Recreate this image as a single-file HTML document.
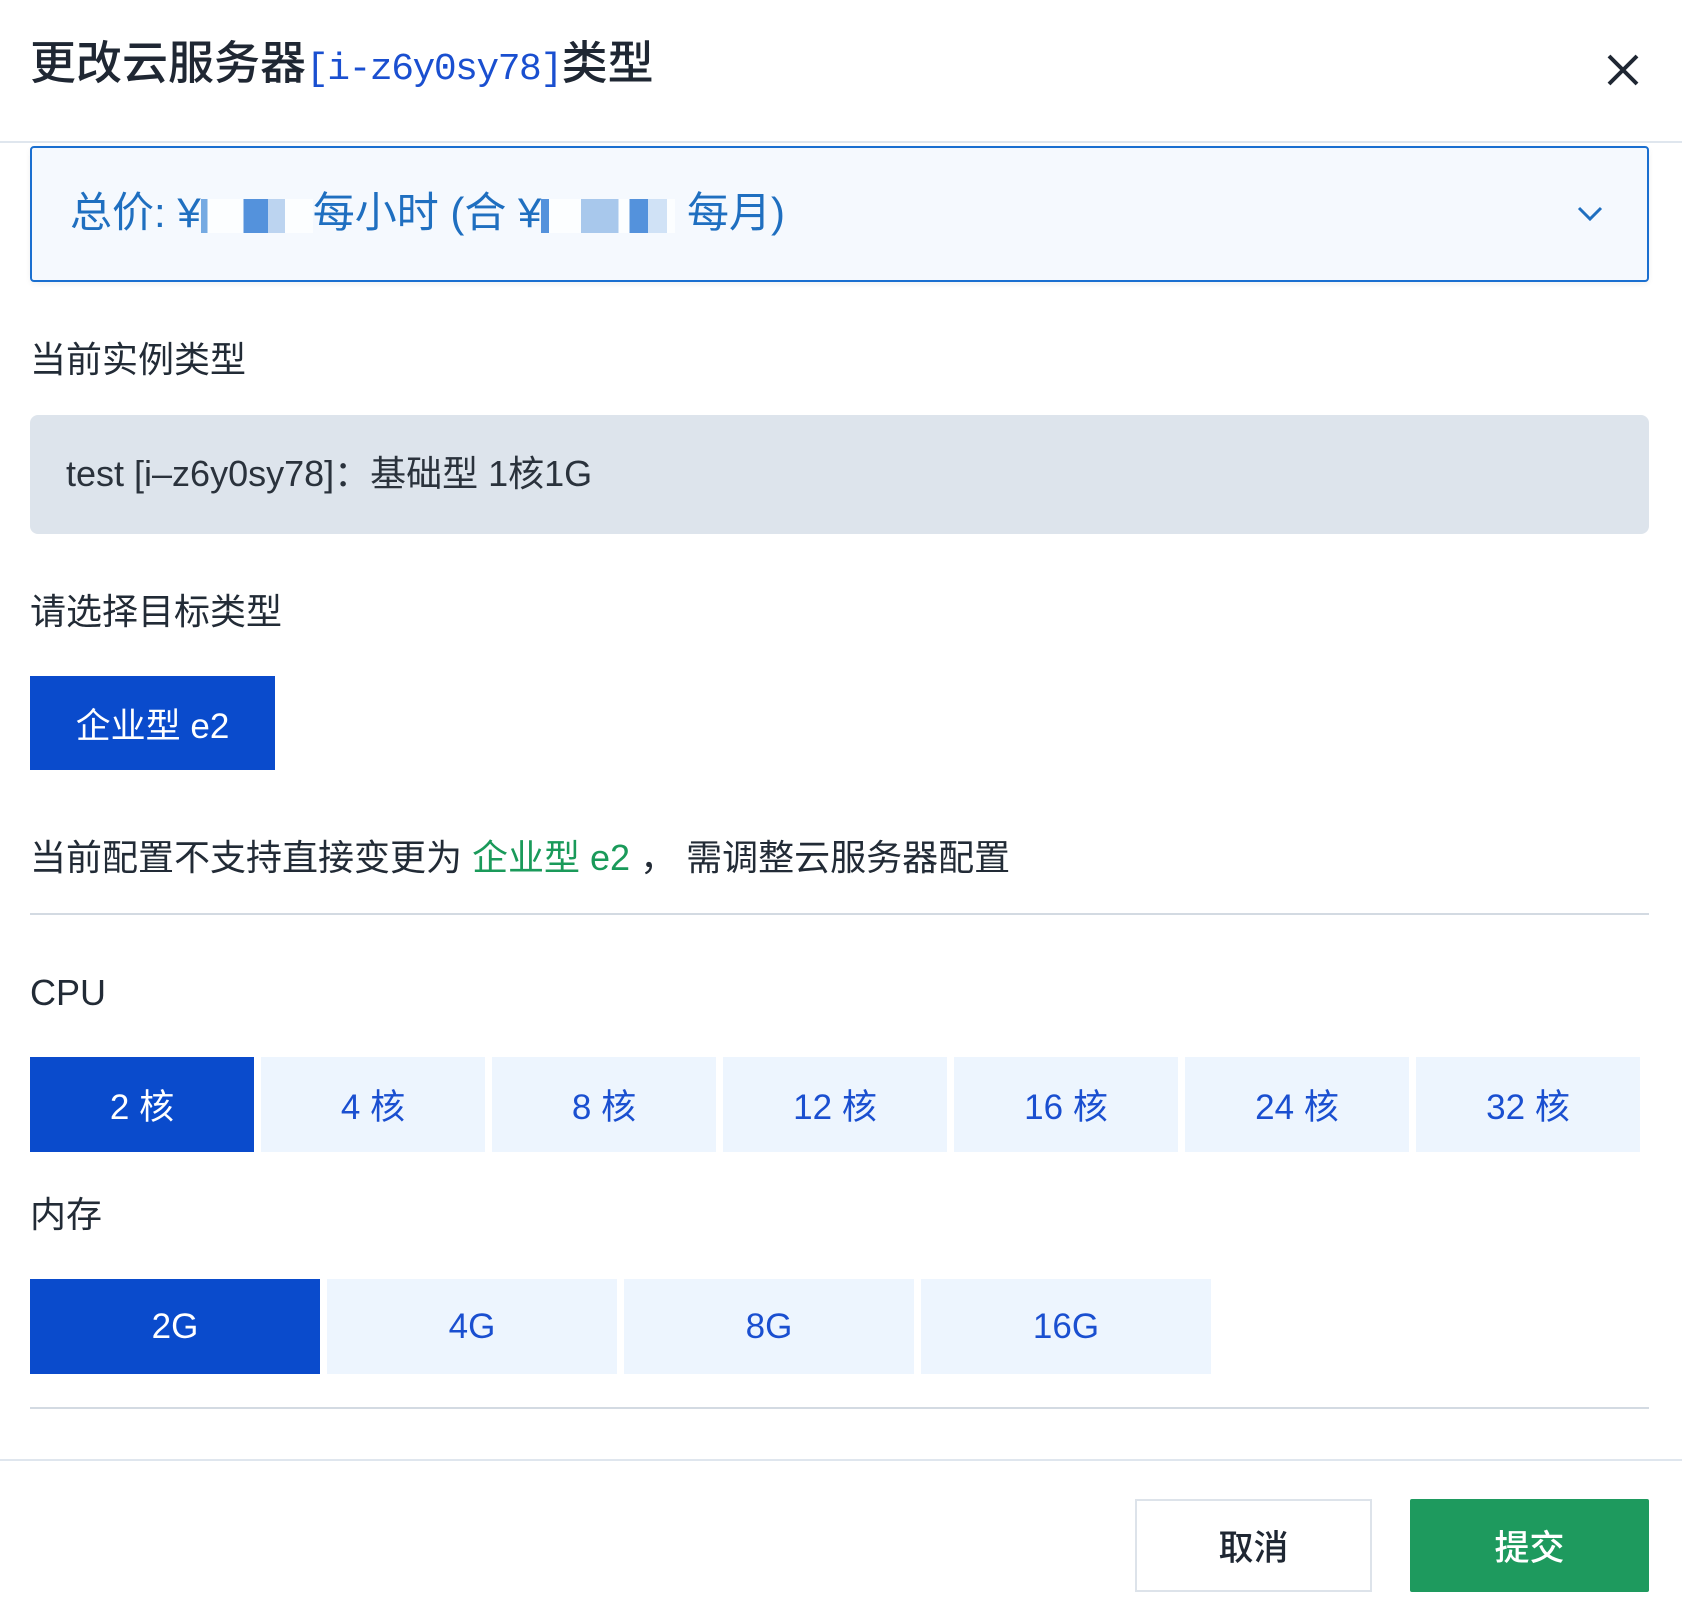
<!DOCTYPE html>
<html><head><meta charset="utf-8"><style>
*{margin:0;padding:0;box-sizing:border-box}
body{width:1682px;height:1606px;background:#fff;position:relative;overflow:hidden;font-family:"Liberation Sans","Noto Sans CJK SC",sans-serif;color:#1f2937}
.a{position:absolute;white-space:nowrap}
.lbl{font-size:36px;color:#222b36;line-height:1}
.btn{position:absolute;display:flex;align-items:center;justify-content:center;font-size:35px;color:#1a4fd0;background:#edf5fe}
.sel{background:#0a4bcc;color:#fff}
</style></head><body>
<div class="a" style="left:30px;top:36px;font-size:46px;line-height:54px;color:#1f2733;font-weight:500">更改云服务器<span style="font-family:'Liberation Mono',monospace;color:#1a4fd0;font-weight:400;font-size:38px;letter-spacing:-1.5px">[i-z6y0sy78]</span>类型</div>
<svg class="a" style="left:1604px;top:51px" width="38" height="38" viewBox="0 0 38 38"><path d="M5 5L33 33M33 5L5 33" stroke="#1f2733" stroke-width="4"/></svg>
<div class="a" style="left:0;top:141px;width:1682px;height:2px;background:#dfe6ee"></div>
<div class="a" style="left:30px;top:146px;width:1619px;height:136px;border:2px solid #1a6fd0;border-radius:4px;background:#f5f9fe;box-shadow:0 2px 6px rgba(0,0,0,.06)"></div>
<div class="a" style="left:70px;top:188px;font-size:42px;line-height:50px;color:#1f6fc0">总价: ¥<span style="display:inline-block;width:112px;height:34px;background:linear-gradient(90deg,#4a90d9 0,#4a90d9 6%,#fff 6%,#fff 38%,#1e6fd0 38%,#1e6fd0 60%,#a9c8ec 60%,#a9c8ec 75%,#fff 75%);opacity:.75;vertical-align:middle"></span>每小时 (合 ¥<span style="display:inline-block;width:134px;height:34px;background:linear-gradient(90deg,#1e6fd0 0,#1e6fd0 6%,#fff 6%,#fff 30%,#8fb8e6 30%,#8fb8e6 58%,#fff 58%,#fff 66%,#1e6fd0 66%,#1e6fd0 80%,#c3dbf4 80%,#c3dbf4 94%,#fff 94%);opacity:.75;vertical-align:middle"></span> 每月)</div>
<svg class="a" style="left:1576px;top:204px" width="28" height="20" viewBox="0 0 28 20"><path d="M3 4L14 15L25 4" stroke="#1f6fc0" stroke-width="3" fill="none"/></svg>
<div class="a lbl" style="left:30px;top:342px">当前实例类型</div>
<div class="a" style="left:30px;top:415px;width:1619px;height:119px;background:#dde4ec;border-radius:8px"></div>
<div class="a" style="left:66px;top:455px;font-size:36px;line-height:38px;color:#2a323c">test [i–z6y0sy78]：基础型&nbsp;1核1G</div>
<div class="a lbl" style="left:30px;top:594px">请选择目标类型</div>
<div class="btn sel" style="left:30px;top:676px;width:245px;height:94px">企业型 e2</div>
<div class="a lbl" style="left:30px;top:840px">当前配置不支持直接变更为 <span style="color:#1a9a5a">企业型 e2</span> ， 需调整云服务器配置</div>
<div class="a" style="left:30px;top:913px;width:1619px;height:2px;background:#d3dae2"></div>
<div class="a lbl" style="left:30px;top:975px">CPU</div>
<div class="btn sel" style="left:30px;top:1057px;width:224px;height:95px">2 核</div>
<div class="btn" style="left:261px;top:1057px;width:224px;height:95px">4 核</div>
<div class="btn" style="left:492px;top:1057px;width:224px;height:95px">8 核</div>
<div class="btn" style="left:723px;top:1057px;width:224px;height:95px">12 核</div>
<div class="btn" style="left:954px;top:1057px;width:224px;height:95px">16 核</div>
<div class="btn" style="left:1185px;top:1057px;width:224px;height:95px">24 核</div>
<div class="btn" style="left:1416px;top:1057px;width:224px;height:95px">32 核</div>
<div class="a lbl" style="left:30px;top:1197px">内存</div>
<div class="btn sel" style="left:30px;top:1279px;width:290px;height:95px">2G</div>
<div class="btn" style="left:327px;top:1279px;width:290px;height:95px">4G</div>
<div class="btn" style="left:624px;top:1279px;width:290px;height:95px">8G</div>
<div class="btn" style="left:921px;top:1279px;width:290px;height:95px">16G</div>
<div class="a" style="left:30px;top:1407px;width:1619px;height:2px;background:#d3dae2"></div>
<div class="a" style="left:0;top:1459px;width:1682px;height:2px;background:#dfe6ee"></div>
<div class="btn" style="left:1135px;top:1499px;width:237px;height:93px;background:#fff;border:2px solid #dde3ea;color:#1f2733;font-weight:500">取消</div>
<div class="btn" style="left:1410px;top:1499px;width:239px;height:93px;background:#1e9a5e;color:#fff;font-weight:500;border-radius:2px">提交</div>
</body></html>
